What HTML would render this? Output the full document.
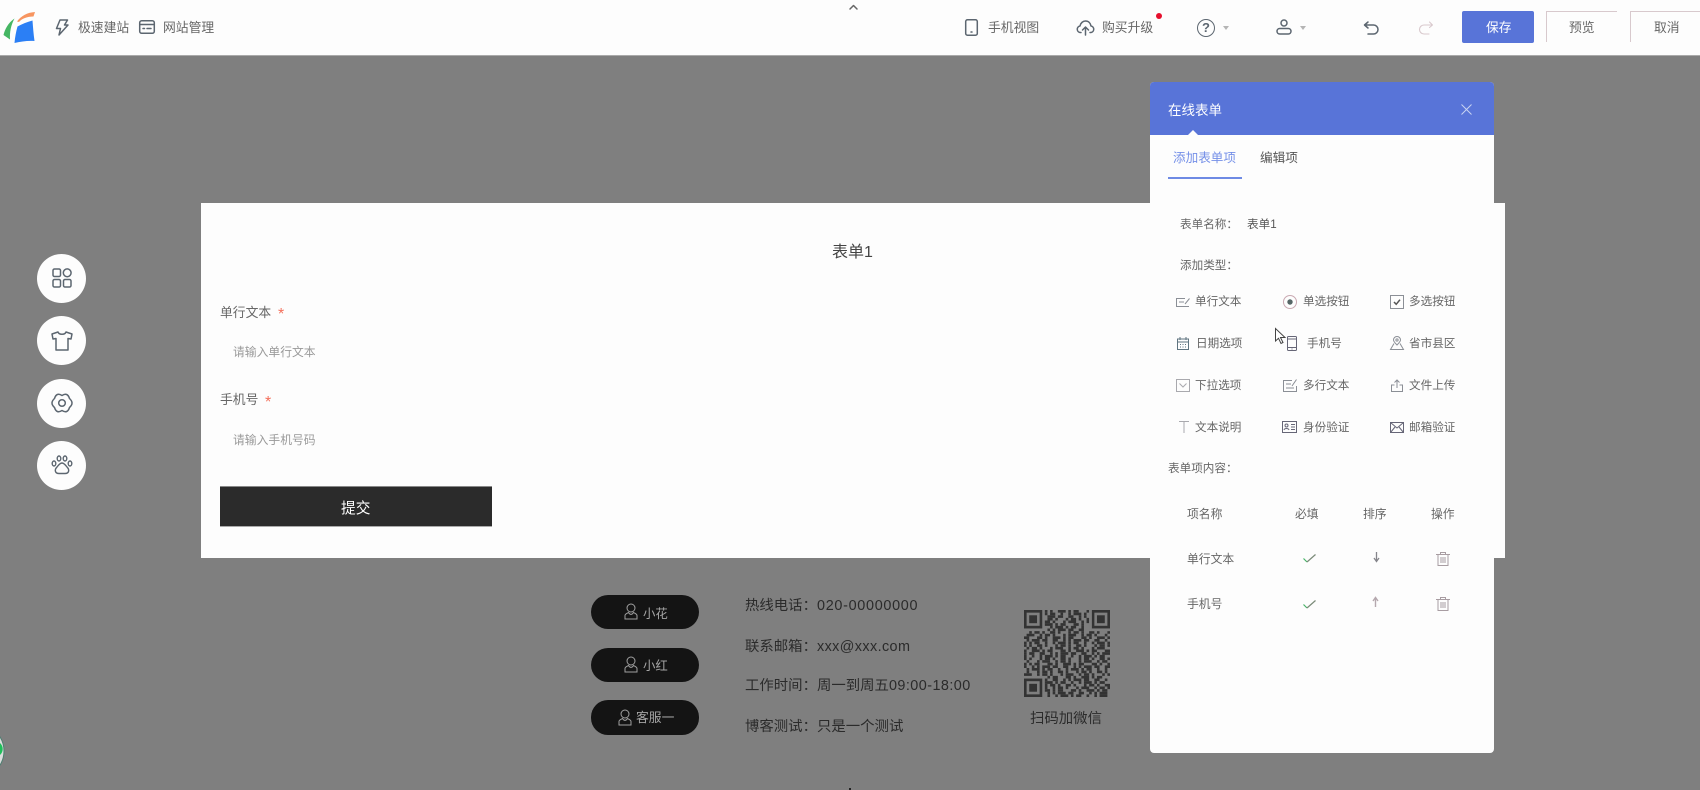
<!DOCTYPE html>
<html lang="zh"><head><meta charset="utf-8"><title>在线表单</title>
<style>
*{box-sizing:border-box}
html,body{margin:0;padding:0}
body{width:1700px;height:790px;position:relative;overflow:hidden;background:#7f7f7f;font-family:"Liberation Sans","Noto Sans CJK SC",sans-serif}
.a{position:absolute}
.t{position:absolute;white-space:nowrap;line-height:1;font-size:12px;color:#666}
.c{font-family:"Noto Sans CJK TC",sans-serif}
svg{position:absolute;overflow:visible}
.ic{fill:none;stroke:#5c6670;stroke-width:1.5;stroke-linecap:round;stroke-linejoin:round}
.th{fill:none;stroke:#8b8f96;stroke-width:1}
.ci{position:absolute;left:37px;width:49px;height:49px;border-radius:50%;background:#fdfdfd}
.pill{position:absolute;left:591px;width:108px;height:34px;border-radius:17px;background:#141414}
.f{position:absolute;white-space:nowrap;line-height:1;font-size:14.4px;color:#2b2b2b;left:745px}
.qa{stroke-dasharray:2 1 1 2 3 1 1 1 2 3}
.qb{stroke-dasharray:1 2 2 1 1 3 1 1 2 1}
.qc{stroke-dasharray:3 1 1 1 2 2 1 2 1 1}
.qd{stroke-dasharray:1 1 3 2 1 1 2 1 1 3}
.qe{stroke-dasharray:2 2 1 1 1 1 3 1 2 2}
</style></head><body>
<div class="a" style="left:0;top:0;width:1700px;height:55px;background:#fdfdfd"></div>
<div class="a" style="left:0;top:55px;width:1700px;height:1px;background:#aaa"></div>
<svg width="40" height="50" style="left:0;top:0">
<path d="M14.5 18.5C8 23 5 29 3.5 35L10 39.5C9.5 32 11 25 14.5 18.5Z" fill="#45b663"/>
<path d="M17 21.500C21 16 27 12.500 35 12L33.500 16.500C27 16.500 22 18.500 19 22Z" fill="#f79560"/>
<path d="M17.5 26.500C22 24 27 22 32.5 20.500C33 27 33.500 34 34.500 41C28 40.500 21 41.500 14.500 43C15 37 16 32 17.500 26.500Z" fill="#2b7ff5"/>
</svg>
<svg class="ic" width="14" height="17" viewBox="0 0 14 17" style="left:55px;top:19px"><path d="M5 1H12.500L9.500 6H13L4 16 5.500 9.500H1.500Z"/></svg>
<div class="t" style="left:78px;top:22px;font-size:12.800px">极速建站</div>
<svg class="ic" width="16" height="14" viewBox="0 0 16 14" style="left:139px;top:20px"><rect x=".7" y=".7" width="14.600" height="12.600" rx="2"/><path d="M1 4.500H15M4 8.500H5.500M8 8.500H12"/></svg>
<div class="t" style="left:163px;top:22px;font-size:12.800px">网站管理</div>
<svg class="ic" width="12" height="6" viewBox="0 0 12 6" style="left:848px;top:4px;stroke:#666"><path d="M2 5 5.500 1.500 9 5"/></svg>

<svg class="ic" width="13" height="17" viewBox="0 0 13 17" style="left:965px;top:19px"><rect x=".7" y=".7" width="11.600" height="15.600" rx="1.800"/><path d="M6 13H7"/></svg>
<div class="t" style="left:988px;top:22px;font-size:12.800px">手机视图</div>
<svg class="ic" width="19" height="16" viewBox="0 0 19 16" style="left:1076px;top:20px"><path d="M5 12.500H4A3.300 3.300 0 0 1 4 6C4.500 3 7 1 9.500 1 12.500 1 14.500 3 15 6A3.300 3.300 0 0 1 15 12.500H14M9.500 15V7M6.500 10 9.500 7 12.500 10"/></svg>
<div class="t" style="left:1102px;top:22px;font-size:12.800px">购买升级</div>
<div class="a" style="left:1156px;top:13px;width:6px;height:6px;border-radius:50%;background:#e60f2d"></div>
<div class="a" style="left:1197px;top:19px;width:18px;height:18px;border:1.500px solid #5c6670;border-radius:50%;font-size:13px;font-weight:bold;line-height:15px;text-align:center;color:#5c6670">?</div>
<div class="a" style="left:1223px;top:26px;border:3px solid transparent;border-top:4px solid #b5b5b5"></div>
<svg class="ic" width="16" height="16" viewBox="0 0 16 16" style="left:1276px;top:19px"><circle cx="8" cy="4" r="3"/><rect x="1" y="9.500" width="14" height="5.500" rx="2.700"/></svg>
<div class="a" style="left:1300px;top:26px;border:3px solid transparent;border-top:4px solid #b5b5b5"></div>
<svg class="ic" width="16" height="14" viewBox="0 0 16 14" style="left:1363px;top:21px"><path d="M5 1 1.500 4 5 7M2 4H10.500A4 4 0 0 1 10.500 13H5"/></svg>
<svg class="ic" width="16" height="14" viewBox="0 0 16 14" style="left:1418px;top:21px;stroke:#d9c9cd;stroke-width:1.100"><path d="M11.500 1 14.500 4 11.500 6.500M14 4H6A4.500 4.500 0 0 0 6 13H11"/></svg>
<div class="a" style="left:1462px;top:11px;width:72px;height:32px;background:#5874d8;border-radius:2px"></div>
<div class="t" style="left:1486px;top:22px;font-size:12.800px;color:#fff">保存</div>
<div class="a" style="left:1546px;top:11px;width:71px;height:31px;border-top:1px solid #d8c9cd;border-left:1px solid #d8c9cd"></div>
<div class="t" style="left:1569px;top:22px;font-size:12.800px">预览</div>
<div class="a" style="left:1630px;top:11px;width:70px;height:31px;border-top:1px solid #d8c9cd;border-left:1px solid #d8c9cd"></div>
<div class="t" style="left:1654px;top:22px;font-size:12.800px">取消</div>

<div class="ci" style="top:254px"></div><div class="ci" style="top:316px"></div><div class="ci" style="top:379px"></div><div class="ci" style="top:441px"></div>
<svg class="ic" width="20" height="20" viewBox="0 0 20 20" style="left:52px;top:268px"><rect x="1" y="1" width="7.500" height="7.500" rx="1.500"/><circle cx="15.200" cy="4.800" r="3.900"/><rect x="1" y="11.500" width="7.500" height="7.500" rx="1.500"/><rect x="11.500" y="11.500" width="7.500" height="7.500" rx="1.500"/></svg>
<svg class="ic" width="22" height="20" viewBox="0 0 22 20" style="left:51px;top:331px"><path d="M7 1C8 4 14 4 15 1L21 3 20 8 17 7.500V19H5V7.500L2 8 1 3Z"/></svg>
<svg class="ic" width="22" height="20" viewBox="0 0 22 20" style="left:51px;top:393px"><path d="M11 2.500Q16.500 -1 18.500 5.500Q23.500 10 18.500 14.500Q16.500 21 11 17.500Q5.500 21 3.500 14.500Q-1.500 10 3.500 5.500Q5.500 -1 11 2.500Z"/><circle cx="11" cy="10" r="3.300"/></svg>
<svg class="ic" width="22" height="20" viewBox="0 0 22 20" style="left:51px;top:455px;stroke-width:1.400"><ellipse cx="3" cy="8.500" rx="1.800" ry="2.500"/><ellipse cx="8" cy="3.500" rx="1.800" ry="2.500"/><ellipse cx="14" cy="3.500" rx="1.800" ry="2.500"/><ellipse cx="19" cy="8.500" rx="1.800" ry="2.500"/><path d="M11 8C13 8 14.500 10 16 12 17.500 13.500 18 15 17.500 16.500 17 18 15.500 18.500 14 18.500H8C6.500 18.500 5 18 4.500 16.500 4 15 4.500 13.500 6 12 7.500 10 9 8 11 8Z"/></svg>

<div class="a" style="left:201px;top:203px;width:1304px;height:355px;background:#fdfdfd"></div>
<div class="t" style="left:832px;top:245px;font-size:16px;color:#444">表单1</div>
<div class="t" style="left:220px;top:307px;font-size:12.800px">单行文本</div>
<div class="t" style="left:278px;top:307px;font-size:16px;color:#f4705c">*</div>
<div class="t" style="left:233px;top:347px;font-size:11.800px;color:#999">请输入单行文本</div>
<div class="t" style="left:220px;top:394px;font-size:12.800px">手机号</div>
<div class="t" style="left:265px;top:395px;font-size:16px;color:#f4705c">*</div>
<div class="t" style="left:233px;top:435px;font-size:11.800px;color:#999">请输入手机号码</div>
<div class="a" style="left:220px;top:486px;width:272px;height:41px;background:#2b2b2b;border-top:1px solid #888;border-bottom:1px solid #aaa"></div>
<div class="t" style="left:341px;top:502px;font-size:14.700px;color:#fff">提交</div>

<div class="pill" style="top:595px"></div><div class="pill" style="top:648px"></div><div class="pill" style="top:700px;height:35px"></div>
<svg class="th" width="14" height="17" viewBox="0 0 14 17" style="left:624px;top:603px;stroke:#a0a0a0"><circle cx="7" cy="5" r="4"/><path d="M1 16V12.500C1 11 3 10.500 4.500 9.500 6 12 8 12 9.500 9.500 11 10.500 13 11 13 12.500V16Z"/></svg>
<div class="t" style="left:643px;top:608px;font-size:12.400px;color:#a5a5a5">小花</div>
<svg class="th" width="14" height="17" viewBox="0 0 14 17" style="left:624px;top:656px;stroke:#a0a0a0"><circle cx="7" cy="5" r="4"/><path d="M1 16V12.500C1 11 3 10.500 4.500 9.500 6 12 8 12 9.500 9.500 11 10.500 13 11 13 12.500V16Z"/></svg>
<div class="t" style="left:643px;top:660px;font-size:12.400px;color:#a5a5a5">小红</div>
<svg class="th" width="14" height="17" viewBox="0 0 14 17" style="left:618px;top:709px;stroke:#a0a0a0"><circle cx="7" cy="5" r="4"/><path d="M1 16V12.500C1 11 3 10.500 4.500 9.500 6 12 8 12 9.500 9.500 11 10.500 13 11 13 12.500V16Z"/></svg>
<div class="t" style="left:636px;top:712px;font-size:12.800px;color:#a5a5a5">客服一</div>

<div class="f" style="top:598px">热线电话<span class="c">：</span><span style="letter-spacing:.7px">020-00000000</span></div>
<div class="f" style="top:639px">联系邮箱<span class="c">：</span><span style="letter-spacing:.4px">xxx@xxx.com</span></div>
<div class="f" style="top:678px">工作时间<span class="c">：</span>周一到周五<span style="letter-spacing:.45px">09:00-18:00</span></div>
<div class="f" style="top:719px">博客测试<span class="c">：</span>只是一个测试</div>

<svg width="86" height="87" viewBox="0 0 33 33" preserveAspectRatio="none" style="left:1023.500px;top:610px" fill="none" stroke="#333">
<g stroke-width="1">
<path class="qa" stroke-dashoffset="1" d="M8 .5H25"/><path class="qc" stroke-dashoffset="4" d="M8 1.500H25"/>
<path class="qe" stroke-dashoffset="7" d="M8 2.500H25"/><path class="qb" stroke-dashoffset="2" d="M8 3.500H25"/>
<path class="qd" stroke-dashoffset="9" d="M8 4.500H25"/><path class="qa" stroke-dashoffset="6" d="M8 5.500H25"/>
<path class="qc" stroke-dashoffset="11" d="M8 6.500H25"/><path class="qe" stroke-dashoffset="3" d="M8 7.500H25"/>
<path class="qb" stroke-dashoffset="8" d="M0 8.500H33"/><path class="qd" stroke-dashoffset="1" d="M0 9.500H33"/>
<path class="qa" stroke-dashoffset="12" d="M0 10.500H33"/><path class="qe" stroke-dashoffset="5" d="M0 11.500H33"/>
<path class="qc" stroke-dashoffset="2" d="M0 12.500H33"/><path class="qb" stroke-dashoffset="13" d="M0 13.500H33"/>
<path class="qd" stroke-dashoffset="6" d="M0 14.500H33"/><path class="qa" stroke-dashoffset="3" d="M0 15.500H33"/>
<path class="qe" stroke-dashoffset="10" d="M0 16.500H33"/><path class="qc" stroke-dashoffset="7" d="M0 17.500H33"/>
<path class="qb" stroke-dashoffset="4" d="M0 18.500H33"/><path class="qd" stroke-dashoffset="11" d="M0 19.500H33"/>
<path class="qa" stroke-dashoffset="8" d="M0 20.500H33"/><path class="qe" stroke-dashoffset="1" d="M0 21.500H33"/>
<path class="qc" stroke-dashoffset="12" d="M0 22.500H33"/><path class="qb" stroke-dashoffset="5" d="M0 23.500H33"/>
<path class="qd" stroke-dashoffset="2" d="M0 24.500H33"/><path class="qa" stroke-dashoffset="9" d="M8 25.500H33"/>
<path class="qe" stroke-dashoffset="13" d="M8 26.500H33"/><path class="qc" stroke-dashoffset="0" d="M8 27.500H33"/>
<path class="qb" stroke-dashoffset="10" d="M8 28.500H33"/><path class="qd" stroke-dashoffset="4" d="M8 29.500H33"/>
<path class="qa" stroke-dashoffset="7" d="M8 30.500H33"/><path class="qe" stroke-dashoffset="3" d="M8 31.500H33"/>
<path class="qc" stroke-dashoffset="9" d="M8 32.500H33"/>
</g>
<g fill="#7f7f7f" stroke-width="1"><rect x=".5" y=".5" width="6" height="6"/><rect x="26.500" y=".5" width="6" height="6"/><rect x=".5" y="26.500" width="6" height="6"/></g>
<g fill="#7f7f7f" stroke="none"><rect x="25" y="0" width="1" height="8"/><rect x="26" y="7" width="7" height="1"/></g>
<g fill="#333" stroke="none"><rect x="2" y="2" width="3" height="3"/><rect x="28" y="2" width="3" height="3"/><rect x="2" y="28" width="3" height="3"/></g>
</svg>
<div class="t" style="left:1030px;top:712px;font-size:14.400px;color:#2b2b2b">扫码加微信</div>

<div class="a" style="left:1150px;top:82px;width:344px;height:671px;background:#fdfdfd;border-radius:4px"></div>
<div class="a" style="left:1150px;top:82px;width:344px;height:53px;background:#5874d8;border-radius:4px 4px 0 0"></div>
<div class="a" style="left:1188px;top:130px;border:5.500px solid transparent;border-top:0;border-bottom:5px solid #fdfdfd"></div>
<div class="t" style="left:1168px;top:104px;font-size:13.500px;color:#fff">在线表单</div>
<svg width="11" height="11" viewBox="0 0 11 11" style="left:1460.500px;top:103.500px" fill="none" stroke="#c9d3f2" stroke-width="1"><path d="M.5.5 10.500 10.500M10.500.5.500 10.500"/></svg>
<div class="t" style="left:1173px;top:152px;font-size:12.600px;color:#7590e8">添加表单项</div>
<div class="a" style="left:1168px;top:177px;width:74px;height:2px;background:#6e8ae4"></div>
<div class="t" style="left:1260px;top:152px;font-size:12.600px;color:#555">编辑项</div>
<div class="t" style="left:1180px;top:219px;font-size:11.600px">表单名称<span class="c">：</span></div>
<div class="t" style="left:1247px;top:219px;font-size:11.600px;color:#555">表单1</div>
<div class="t" style="left:1180px;top:260px;font-size:11.600px">添加类型<span class="c">：</span></div>

<div class="t" style="left:1195px;top:296px;font-size:11.600px">单行文本</div>
<div class="t" style="left:1303px;top:296px;font-size:11.600px">单选按钮</div>
<div class="t" style="left:1409px;top:296px;font-size:11.600px">多选按钮</div>
<div class="t" style="left:1196px;top:338px;font-size:11.600px">日期选项</div>
<div class="t" style="left:1307px;top:338px;font-size:11.600px">手机号</div>
<div class="t" style="left:1409px;top:338px;font-size:11.600px">省市县区</div>
<div class="t" style="left:1195px;top:380px;font-size:11.600px">下拉选项</div>
<div class="t" style="left:1303px;top:380px;font-size:11.600px">多行文本</div>
<div class="t" style="left:1409px;top:380px;font-size:11.600px">文件上传</div>
<div class="t" style="left:1195px;top:422px;font-size:11.600px">文本说明</div>
<div class="t" style="left:1303px;top:422px;font-size:11.600px">身份验证</div>
<div class="t" style="left:1409px;top:422px;font-size:11.600px">邮箱验证</div>
<div class="t" style="left:1168px;top:463px;font-size:11.600px">表单项内容<span class="c">：</span></div>

<svg class="th" width="14" height="10" viewBox="0 0 14 10" style="left:1176px;top:297px"><path d="M9 1.500H.5V9.500H13M3 5H8M9 7 13.500 1.500"/></svg>
<svg class="th" width="14" height="14" viewBox="0 0 14 14" style="left:1283px;top:295px"><circle cx="7" cy="7" r="6.500" stroke="#c9a9b2"/><circle cx="7" cy="7" r="2.700" fill="#566" stroke="none"/></svg>
<svg class="th" width="14" height="14" viewBox="0 0 14 14" style="left:1390px;top:295px"><rect x=".5" y=".5" width="13" height="13"/><path d="M4 7 6.200 9.300 10 4.700" stroke="#555" stroke-width="1.500"/></svg>
<svg class="th" width="12" height="13" viewBox="0 0 12 13" style="left:1177px;top:337px;stroke:#5f7480"><rect x=".5" y="2" width="11" height="10.500"/><path d="M3 0V3M9 0V3M.5 5H11.500M3 7.500H4M5.500 7.500H6.500M8 7.500H9M3 10H4M5.500 10H6.500M8 10H9"/></svg>
<svg class="th" width="10" height="15" viewBox="0 0 10 15" style="left:1287px;top:336px;stroke:#667"><rect x=".5" y=".5" width="9" height="14" rx="1"/><path d="M.5 3H9.500M.5 11.500H9.500M4.500 13H5.500"/></svg>
<svg class="th" width="14" height="14" viewBox="0 0 14 14" style="left:1390px;top:336px"><path d="M7 9C5 7 3.500 5.500 3.500 4A3.500 3.500 0 0 1 10.500 4C10.500 5.500 9 7 7 9ZM4 7.500 .5 13.500H13.500L10 7.500"/><circle cx="7" cy="4" r="1.100"/></svg>
<svg class="th" width="14" height="13" viewBox="0 0 14 13" style="left:1176px;top:379px;stroke:#a9a9ae"><rect x=".5" y=".5" width="13" height="12"/><path d="M3.500 4.500 7 8 10.500 4.500"/></svg>
<svg class="th" width="14" height="13" viewBox="0 0 14 13" style="left:1283px;top:379px"><path d="M9 1.500H.5V12.500H13.500V7M3 5H8M3 9H11M9 7 13.500 .5"/></svg>
<svg class="th" width="12" height="13" viewBox="0 0 12 13" style="left:1391px;top:379px"><path d="M6 9V1M3.500 3.500 6 1 8.500 3.500M3.500 6H.5V12.500H11.500V6H8.500"/></svg>
<svg class="th" width="10" height="12" viewBox="0 0 10 12" style="left:1179px;top:421px;stroke:#a9a9ae"><path d="M0 .5H10M5 .5V12"/></svg>
<svg class="th" width="15" height="12" viewBox="0 0 15 12" style="left:1282px;top:421px;stroke:#667"><rect x=".5" y=".5" width="14" height="11"/><circle cx="4.500" cy="4.500" r="1.500"/><path d="M2 9C2.500 7 6.500 7 7 9M9 3.500H13M9 6H13M9 8.500H13"/></svg>
<svg class="th" width="14" height="11" viewBox="0 0 14 11" style="left:1390px;top:422px;stroke:#667"><rect x=".5" y=".5" width="13" height="10"/><path d="M.5.5 7 6 13.500.5M.5 10.500 5 5M13.500 10.500 9 5"/></svg>
<svg width="12" height="17" viewBox="0 0 12 17" style="left:1275px;top:328px"><path d="M.5.5V13L3.500 10.300 6 15.500 8 14.500 5.500 9.500H10Z" fill="#fff" stroke="#444" stroke-width="1"/></svg>

<div class="t" style="left:1187px;top:509px;font-size:11.800px">项名称</div>
<div class="t" style="left:1295px;top:509px;font-size:11.800px">必填</div>
<div class="t" style="left:1363px;top:509px;font-size:11.800px">排序</div>
<div class="t" style="left:1431px;top:509px;font-size:11.800px">操作</div>
<div class="t" style="left:1187px;top:554px;font-size:11.800px">单行文本</div>
<div class="t" style="left:1187px;top:599px;font-size:11.800px">手机号</div>
<svg width="13" height="9" viewBox="0 0 13 9" style="left:1303px;top:554px" fill="none" stroke-width="1.200"><path d="M.5 4.500 4 8" stroke="#49b36a"/><path d="M4 8 12.500.5" stroke="#7a8a78"/></svg>
<svg width="13" height="9" viewBox="0 0 13 9" style="left:1303px;top:600px" fill="none" stroke-width="1.200"><path d="M.5 4.500 4 8" stroke="#49b36a"/><path d="M4 8 12.500.5" stroke="#7a8a78"/></svg>
<svg width="7" height="10" viewBox="0 0 7 10" style="left:1373px;top:552px" fill="none" stroke="#85858b" stroke-width="1.300"><path d="M3.500 0V9M1 6 3.500 9.500 6 6"/></svg>
<svg width="7" height="10" viewBox="0 0 7 10" style="left:1372px;top:597px" fill="none" stroke="#b5a8ae" stroke-width="1.400"><path d="M3.500 10V1M1 4 3.500.5 6 4"/></svg>
<svg class="th" width="14" height="14" viewBox="0 0 14 14" style="left:1436px;top:552px;stroke:#a89da2"><path d="M0 2.500H14M4.500 2.500V.5H9.500V2.500M2 2.500V13.500H12V2.500M5 5V11M7 5V11M9 5V11"/></svg>
<svg class="th" width="14" height="14" viewBox="0 0 14 14" style="left:1436px;top:597px;stroke:#a89da2"><path d="M0 2.500H14M4.500 2.500V.5H9.500V2.500M2 2.500V13.500H12V2.500M5 5V11M7 5V11M9 5V11"/></svg>

<svg width="6" height="30" viewBox="0 0 6 30" style="left:0;top:736px"><circle cx="-22.500" cy="15" r="26.500" fill="#dcdcdc" stroke="#4d7f72" stroke-width="1"/><circle cx="-5.300" cy="13" r="8" fill="#1fbf5a"/></svg>
<div class="a" style="left:849px;top:788px;width:2px;height:2px;background:#222"></div>
</body></html>
